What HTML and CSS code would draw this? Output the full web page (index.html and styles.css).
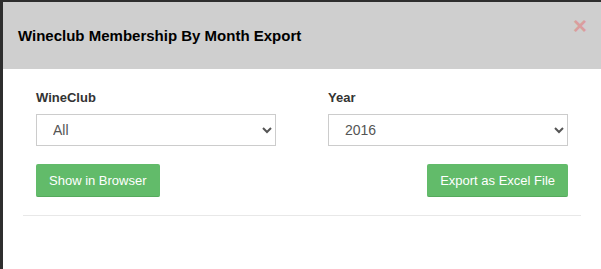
FILE: index.html
```html
<!DOCTYPE html>
<html lang="en">
<head>
  <meta charset="UTF-8">
  <title>Wineclub Membership By Month Export</title>
  <link rel="stylesheet" href="styles.css">
</head>
<body>
  <div class="modal">
    <div class="modal-header">
      <h4 class="modal-title">Wineclub Membership By Month Export</h4>
      <button class="close" type="button">&times;</button>
    </div>
    <div class="modal-body">
      <div class="form-row">
        <div class="form-col">
          <label for="wineclub">WineClub</label>
          <select id="wineclub" class="form-control">
            <option>All</option>
          </select>
          <div class="btn-line">
            <button class="btn btn-success">Show in Browser</button>
          </div>
        </div>
        <div class="form-col">
          <label for="year">Year</label>
          <select id="year" class="form-control">
            <option>2016</option>
          </select>
          <div class="btn-line right">
            <button class="btn btn-success">Export as Excel File</button>
          </div>
        </div>
      </div>
      <hr class="divider">
    </div>
  </div>
</body>
</html>
```

FILE: styles.css
```css
body {
  margin: 0;
  background-color: #2e2e2e;
  font-family: "Liberation Sans", Arial, sans-serif;
  color: #333;
  height: 269px;
  overflow: hidden;
}

.modal {
  margin: 2px 0 0 3px;
  background-color: #ffffff;
  height: 267px;
}

.modal-header {
  position: relative;
  background-color: #cfcfcf;
  padding: 24px 15px 23px 15px;
}

.modal-title {
  margin: 0;
  font-size: 15px;
  line-height: 20px;
  font-weight: bold;
  color: #000;
}

.close {
  position: absolute;
  top: 12px;
  right: 14px;
  padding: 0;
  border: none;
  background: none;
  font-family: "Liberation Sans", Arial, sans-serif;
  font-size: 24px;
  font-weight: bold;
  line-height: 24px;
  color: #e08a8a;
  opacity: 0.7;
  cursor: pointer;
}

.modal-body {
  padding: 20px 20px 0 20px;
}

.form-row {
  display: grid;
  grid-template-columns: 240px 240px;
  column-gap: 52px;
  padding: 0 13px;
}

.form-col label {
  display: block;
  font-size: 13px;
  line-height: 18px;
  font-weight: bold;
  color: #333;
  margin-bottom: 7px;
}

.form-control {
  display: block;
  width: 240px;
  height: 32px;
  padding: 4px 12px;
  font-family: "Liberation Sans", Arial, sans-serif;
  font-size: 14px;
  color: #555;
  background-color: #fff;
  border: 1px solid #ccc;
  border-radius: 0;
}

.btn-line {
  display: flex;
  margin-top: 18px;
}

.btn-line.right {
  justify-content: flex-end;
}

.btn {
  height: 33px;
  padding: 0 13px;
  font-family: "Liberation Sans", Arial, sans-serif;
  font-size: 13px;
  border-radius: 2px;
  cursor: pointer;
}

.btn-success {
  color: #fff;
  background-color: #62bb6a;
  border: none;
  border-bottom: 1px solid #55a95c;
}

.divider {
  margin: 18px 0 0 0;
  border: none;
  border-top: 1px solid #e8e8e8;
}
```
